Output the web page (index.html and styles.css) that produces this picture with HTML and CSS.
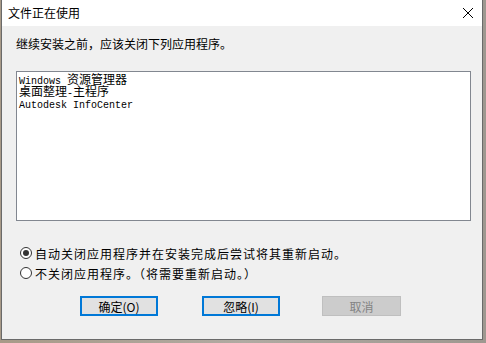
FILE: index.html
```html
<!DOCTYPE html>
<html>
<head>
<meta charset="utf-8">
<link rel="stylesheet" href="styles.css">
</head>
<body>
<div class="win">
  <div class="titlebar">
    <span class="title">文件正在使用</span>
    <svg class="close" width="12" height="12" viewBox="0 0 12 12"><path d="M1 1 L11 11 M11 1 L1 11" stroke="#000" stroke-width="1" fill="none"/></svg>
  </div>
  <div class="body">
    <div class="intro">继续安装之前，应该关闭下列应用程序。</div>
    <div class="list">
      <div class="item"><span class="lat">Windows </span>资源管理器</div>
      <div class="item">桌面整理<span class="lat">-</span>主程序</div>
      <div class="item"><span class="lat">Autodesk InfoCenter</span></div>
    </div>
    <div class="radios">
      <div class="radio"><span class="dot on"></span><span class="rtext">自动关闭应用程序并在安装完成后尝试将其重新启动。</span></div>
      <div class="radio"><span class="dot"></span><span class="rtext">不关闭应用程序。（将需要重新启动。）</span></div>
    </div>
    <div class="buttons">
      <div class="btn focus">确定(O)</div>
      <div class="btn focus">忽略(I)</div>
      <div class="btn disabled">取消</div>
    </div>
  </div>
</div>
</body>
</html>
```
FILE: styles.css
```css
html, body {
  margin: 0;
  padding: 0;
}
body {
  width: 486px;
  height: 343px;
  background: linear-gradient(90deg, #a89a88 0%, #b0aaa2 50%, #9e9890 100%);
  font-family: "Noto Sans CJK SC", "Liberation Sans", sans-serif;
  font-size: 12px;
  color: #000;
  overflow: hidden;
}
.win {
  margin-left: 1px;
  width: 480px;
  height: 339px;
  border: 1px solid #6a6a6a;
  border-top: none;
  background: #f0f0f0;
  display: flex;
  flex-direction: column;
}
.titlebar {
  height: 26px;
  background: #fff;
  display: flex;
  align-items: center;
  justify-content: space-between;
  padding: 0 8px 0 6px;
}
.title {
  font-size: 12px;
  line-height: 16px;
}
.close {
  display: block;
}
.body {
  flex: 1;
  padding: 10px 0 0 14px;
  display: flex;
  flex-direction: column;
}
.intro {
  line-height: 16px;
  height: 16px;
  margin-bottom: 19px;
}
.list {
  width: 449px;
  height: 146px;
  background: #fff;
  border: 1px solid #828790;
  padding: 1px 2px;
}
.item {
  font-size: 12px;
  line-height: 12px;
  height: 12px;
  white-space: nowrap;
}
.lat {
  font-family: "Liberation Mono", monospace;
  font-size: 10px;
}
.radios {
  margin-top: 22px;
  padding-left: 4px;
}
.radio {
  display: flex;
  align-items: center;
  height: 20px;
  gap: 3px;
}
.rtext {
  letter-spacing: 1px;
}
.dot {
  width: 12px;
  height: 12px;
  border: 1px solid #333;
  border-radius: 50%;
  background: #fff;
  box-sizing: border-box;
  display: flex;
  align-items: center;
  justify-content: center;
  flex: none;
}
.dot.on::after {
  content: "";
  width: 6px;
  height: 6px;
  border-radius: 50%;
  background: #333;
}
.buttons {
  margin-top: 13px;
  display: flex;
  padding-left: 64px;
}
.btn {
  width: 78px;
  height: 20px;
  box-sizing: border-box;
  background: #e1e1e1;
  border: 1px solid #adadad;
  display: flex;
  align-items: center;
  justify-content: center;
  font-size: 12px;
}
.btn + .btn {
  margin-left: 44px;
}
.btn + .btn + .btn {
  margin-left: 42px;
}
.btn.focus {
  border: 2px solid #0078d7;
}
.btn.disabled {
  background: #cccccc;
  border: 1px solid #bfbfbf;
  color: #838383;
  width: 79px;
}
```
